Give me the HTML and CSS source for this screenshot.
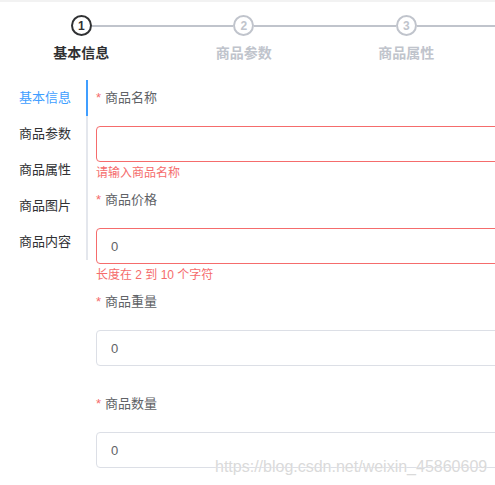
FILE: index.html
```html
<!DOCTYPE html>
<html lang="zh-CN">
<head>
    <meta charset="UTF-8">
    <meta name="viewport" content="width=device-width, initial-scale=1.0">
    <title>添加商品</title>
    <link rel="stylesheet" href="styles.css">
</head>
<body>
    <div class="page">
        <!-- 步骤条 -->
        <div class="steps">
            <div class="step active">
                <div class="step-head">
                    <span class="line hidden"></span>
                    <span class="step-icon">1</span>
                    <span class="line"></span>
                </div>
                <div class="step-title">基本信息</div>
            </div>
            <div class="step">
                <div class="step-head">
                    <span class="line"></span>
                    <span class="step-icon">2</span>
                    <span class="line"></span>
                </div>
                <div class="step-title">商品参数</div>
            </div>
            <div class="step">
                <div class="step-head">
                    <span class="line"></span>
                    <span class="step-icon">3</span>
                    <span class="line"></span>
                </div>
                <div class="step-title">商品属性</div>
            </div>
            <!-- 后续步骤在可视区域之外，只保留连线 -->
            <div class="step-rest">
                <span class="line"></span>
            </div>
        </div>

        <div class="main">
            <!-- 左侧标签页 -->
            <div class="tabs">
                <div class="tab active">基本信息</div>
                <div class="tab">商品参数</div>
                <div class="tab">商品属性</div>
                <div class="tab">商品图片</div>
                <div class="tab">商品内容</div>
            </div>

            <!-- 表单 -->
            <form class="form">
                <div class="form-item is-error">
                    <label class="form-label"><span class="req">*</span>商品名称</label>
                    <input class="form-input" type="text" value="">
                    <div class="form-tip">请输入商品名称</div>
                </div>
                <div class="form-item is-error">
                    <label class="form-label"><span class="req">*</span>商品价格</label>
                    <input class="form-input" type="text" value="0">
                    <div class="form-tip">长度在 2 到 10 个字符</div>
                </div>
                <div class="form-item">
                    <label class="form-label"><span class="req">*</span>商品重量</label>
                    <input class="form-input" type="text" value="0">
                    <div class="form-tip"></div>
                </div>
                <div class="form-item">
                    <label class="form-label"><span class="req">*</span>商品数量</label>
                    <input class="form-input" type="text" value="0">
                    <div class="form-tip"></div>
                </div>
            </form>
        </div>
    </div>

    <div class="watermark">https://blog.csdn.net/weixin_45860609</div>
</body>
</html>
```

FILE: styles.css
```css
html, body {
    margin: 0;
    padding: 0;
    overflow: hidden;
    background-color: #ffffff;
}
body {
    font-family: "Liberation Sans", "Noto Sans CJK SC", sans-serif;
    color: #303133;
    border-top: 2px solid #f2f2f2;
    height: 483px;
    position: relative;
}
.page {
    width: 650px;
}
.steps {
    display: flex;
    padding-top: 13px;
}
.step {
    flex: none;
    width: 162.5px;
    display: flex;
    flex-direction: column;
    align-items: center;
}
.step-head {
    display: flex;
    align-items: center;
    width: 100%;
}
.step-rest {
    flex: 1;
    display: flex;
    align-items: center;
    height: 21px;
}
.line {
    flex: 1;
    height: 2px;
    background-color: #c0c4cc;
}
.line.hidden {
    background-color: transparent;
}
.step-icon {
    flex: none;
    box-sizing: border-box;
    width: 21px;
    height: 21px;
    border: 2px solid #c0c4cc;
    border-radius: 50%;
    color: #c0c4cc;
    font-size: 12px;
    font-weight: bold;
    display: flex;
    align-items: center;
    justify-content: center;
}
.step-title {
    margin-top: 7px;
    line-height: 20px;
    font-size: 14px;
    font-weight: bold;
    color: #c0c4cc;
}
.step.active .step-icon {
    border-color: #303133;
    color: #303133;
}
.step.active .step-title {
    color: #303133;
}
.main {
    display: flex;
    margin-top: 17px;
}
.tabs {
    flex: none;
    width: 86px;
    border-right: 2px solid #e4e7ed;
    align-self: flex-start;
}
.tab {
    height: 36px;
    line-height: 36px;
    padding-left: 19px;
    font-size: 13px;
    color: #303133;
}
.tab.active {
    color: #409eff;
    margin-right: -2px;
    border-right: 2px solid #409eff;
}
.form {
    flex: 1;
    margin-left: 8px;
    padding-top: 4px;
}
.form-item {
    display: flex;
    flex-direction: column;
}
.form-label {
    height: 28px;
    line-height: 28px;
    margin-bottom: 14px;
    font-size: 13px;
    color: #606266;
}
.req {
    color: #f56c6c;
    margin-right: 4px;
}
.form-input {
    box-sizing: border-box;
    height: 36px;
    width: 100%;
    padding: 0 14px;
    border: 1px solid #dcdfe6;
    border-radius: 4px;
    font-family: inherit;
    font-size: 13px;
    color: #606266;
    outline: none;
}
.is-error .form-input {
    border-color: #f56c6c;
}
.form-tip {
    height: 24px;
    padding-top: 5px;
    box-sizing: border-box;
    font-size: 12px;
    line-height: 12px;
    color: #f56c6c;
}
.watermark {
    position: absolute;
    left: 215px;
    top: 456px;
    font-family: "Liberation Sans", Arial, sans-serif;
    font-size: 16px;
    color: #dadada;
    text-shadow: 0 0 1px #ffffff;
    white-space: nowrap;
}
```
